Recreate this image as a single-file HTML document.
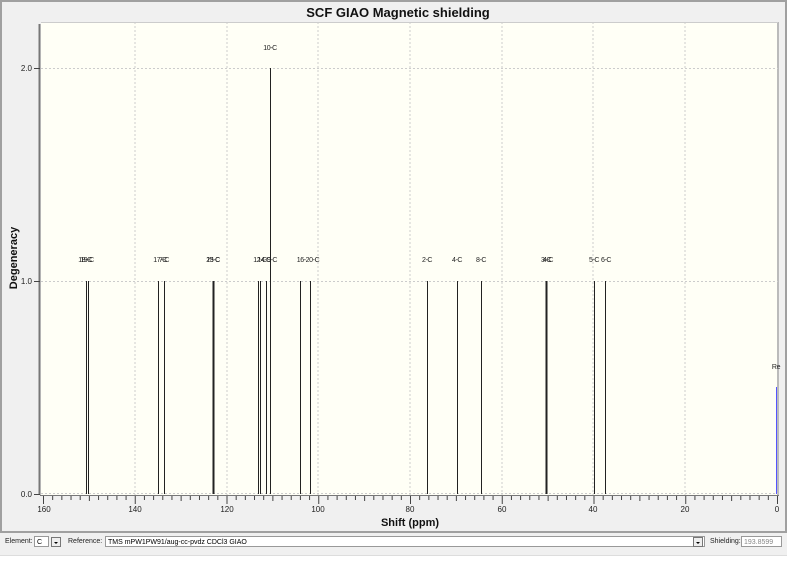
<!DOCTYPE html>
<html><head><meta charset="utf-8"><style>
body{margin:0;background:#fff;width:795px;height:565px;overflow:hidden;font-family:"Liberation Sans",sans-serif}
svg{position:absolute;left:0;top:0}
.s{font-size:7px;fill:#222;letter-spacing:-0.4px}
.t{font-size:8px;fill:#222}
.ui{position:absolute;font-size:7px;color:#222;top:538px}
.box{position:absolute;top:536px;height:11px;border:1px solid #999;background:#fff;font-size:7px;line-height:11px;padding-left:2px;box-sizing:border-box}
.btn{position:absolute;top:537px;width:10px;height:10px;border:1px solid #777;background:#eee;box-sizing:border-box}
.btn:after{content:"";position:absolute;left:2px;top:4px;border:2px solid transparent;border-top:2px solid #000}
</style></head><body>
<svg width="795" height="565" id="g">
<rect x="0" y="0" width="787" height="533" fill="#f0f0f0"/>
<rect x="1" y="1" width="785" height="531" fill="none" stroke="#a0a0a0" stroke-width="2"/>
<rect x="0" y="533" width="787" height="22" fill="#f0f0f0"/>
<line x1="0" y1="555.5" x2="787" y2="555.5" stroke="#ddd"/>
<text x="398" y="17" text-anchor="middle" font-size="13" font-weight="bold" fill="#111">SCF GIAO Magnetic shielding</text>
<rect x="41" y="22" width="737" height="473" fill="#fffff6"/>
<line x1="778" y1="22" x2="778" y2="495" stroke="#bbb" stroke-width="2"/>
<line x1="41" y1="22.5" x2="778" y2="22.5" stroke="#ccc"/>
<g stroke="#ccc" stroke-dasharray="2,2">
<line x1="135" y1="22" x2="135" y2="495"/><line x1="227" y1="22" x2="227" y2="495"/><line x1="318" y1="22" x2="318" y2="495"/><line x1="410" y1="22" x2="410" y2="495"/><line x1="502" y1="22" x2="502" y2="495"/><line x1="593" y1="22" x2="593" y2="495"/><line x1="685" y1="22" x2="685" y2="495"/>
<line x1="41" y1="68.5" x2="778" y2="68.5"/><line x1="41" y1="281.5" x2="778" y2="281.5"/><line x1="41" y1="493.5" x2="778" y2="493.5"/>
</g>
<line x1="39.5" y1="24" x2="39.5" y2="495" stroke="#777" stroke-width="2"/>
<line x1="40" y1="495.5" x2="779" y2="495.5" stroke="#777"/>
<g stroke="#444"><line x1="34" y1="68.5" x2="40" y2="68.5"/><line x1="34" y1="281.5" x2="40" y2="281.5"/><line x1="34" y1="494.5" x2="40" y2="494.5"/></g>
<g id="ticks" stroke="#444"></g>
<g class="t" text-anchor="end"><text x="32" y="71">2.0</text><text x="32" y="284">1.0</text><text x="32" y="497">0.0</text></g>
<g class="t" text-anchor="middle"><text x="44" y="512">160</text><text x="135" y="512">140</text><text x="227" y="512">120</text><text x="318" y="512">100</text><text x="410" y="512">80</text><text x="502" y="512">60</text><text x="593" y="512">40</text><text x="685" y="512">20</text><text x="777" y="512">0</text></g>
<text x="410" y="526" text-anchor="middle" font-size="11" font-weight="bold" fill="#111">Shift (ppm)</text>
<text transform="translate(17,258) rotate(-90)" text-anchor="middle" font-size="11" font-weight="bold" fill="#111">Degeneracy</text>
<g stroke="#222">
<line x1="86.5" y1="281" x2="86.5" y2="494"/><line x1="88.5" y1="281" x2="88.5" y2="494"/>
<line x1="158.5" y1="281" x2="158.5" y2="494"/><line x1="164.5" y1="281" x2="164.5" y2="494"/>
<line x1="213.5" y1="281" x2="213.5" y2="494" stroke-width="2"/>
<line x1="258.5" y1="281" x2="258.5" y2="494"/><line x1="260.5" y1="281" x2="260.5" y2="494"/><line x1="266.5" y1="281" x2="266.5" y2="494"/>
<line x1="270.5" y1="68" x2="270.5" y2="494"/>
<line x1="300.5" y1="281" x2="300.5" y2="494"/><line x1="310.5" y1="281" x2="310.5" y2="494"/>
<line x1="427.5" y1="281" x2="427.5" y2="494"/><line x1="457.5" y1="281" x2="457.5" y2="494"/><line x1="481.5" y1="281" x2="481.5" y2="494"/>
<line x1="546.5" y1="281" x2="546.5" y2="494" stroke-width="2"/>
<line x1="594.5" y1="281" x2="594.5" y2="494"/><line x1="605.5" y1="281" x2="605.5" y2="494"/>
</g>
<line x1="776.5" y1="387" x2="776.5" y2="494" stroke="#55f"/>
<g class="s" text-anchor="middle">
<text x="270" y="50">10-C</text>
<text x="87" y="262">19-C</text><text x="85" y="262">18-C</text>
<text x="160" y="262">17-C</text><text x="164" y="262">7-C</text>
<text x="213" y="262">25-C</text><text x="213" y="262">13-C</text>
<text x="260" y="262">12-C</text><text x="264" y="262">14-C</text><text x="272" y="262">9-C</text>
<text x="308" y="262">16-20-C</text>
<text x="427" y="262">2-C</text><text x="457" y="262">4-C</text><text x="481" y="262">8-C</text>
<text x="546" y="262">3-C</text><text x="548" y="262">4-C</text>
<text x="594" y="262">5-C</text><text x="606" y="262">6-C</text>
<text x="776" y="369">Re</text>
</g>
</svg>
<div class="ui" style="left:5px">Element:</div>
<div class="box" style="left:34px;width:15px">C</div>
<div class="btn" style="left:51px"></div>
<div class="ui" style="left:68px">Reference:</div>
<div class="box" style="left:105px;width:600px">TMS mPW1PW91/aug-cc-pvdz CDCl3 GIAO</div>
<div class="btn" style="left:693px"></div>
<div class="ui" style="left:710px">Shielding:</div>
<div class="box" style="left:741px;width:41px;color:#888">193.8599</div>
<script>
var g=document.getElementById('ticks'),s='';
for(var i=0;i<=80;i++){var x=43+i*734/80;var L=(i%10==0)?8:(i%5==0?5:4);s+='<line x1="'+(x+.5)+'" y1="496" x2="'+(x+.5)+'" y2="'+(496+L)+'"/>';}
g.innerHTML=s;
</script>
</body></html>
